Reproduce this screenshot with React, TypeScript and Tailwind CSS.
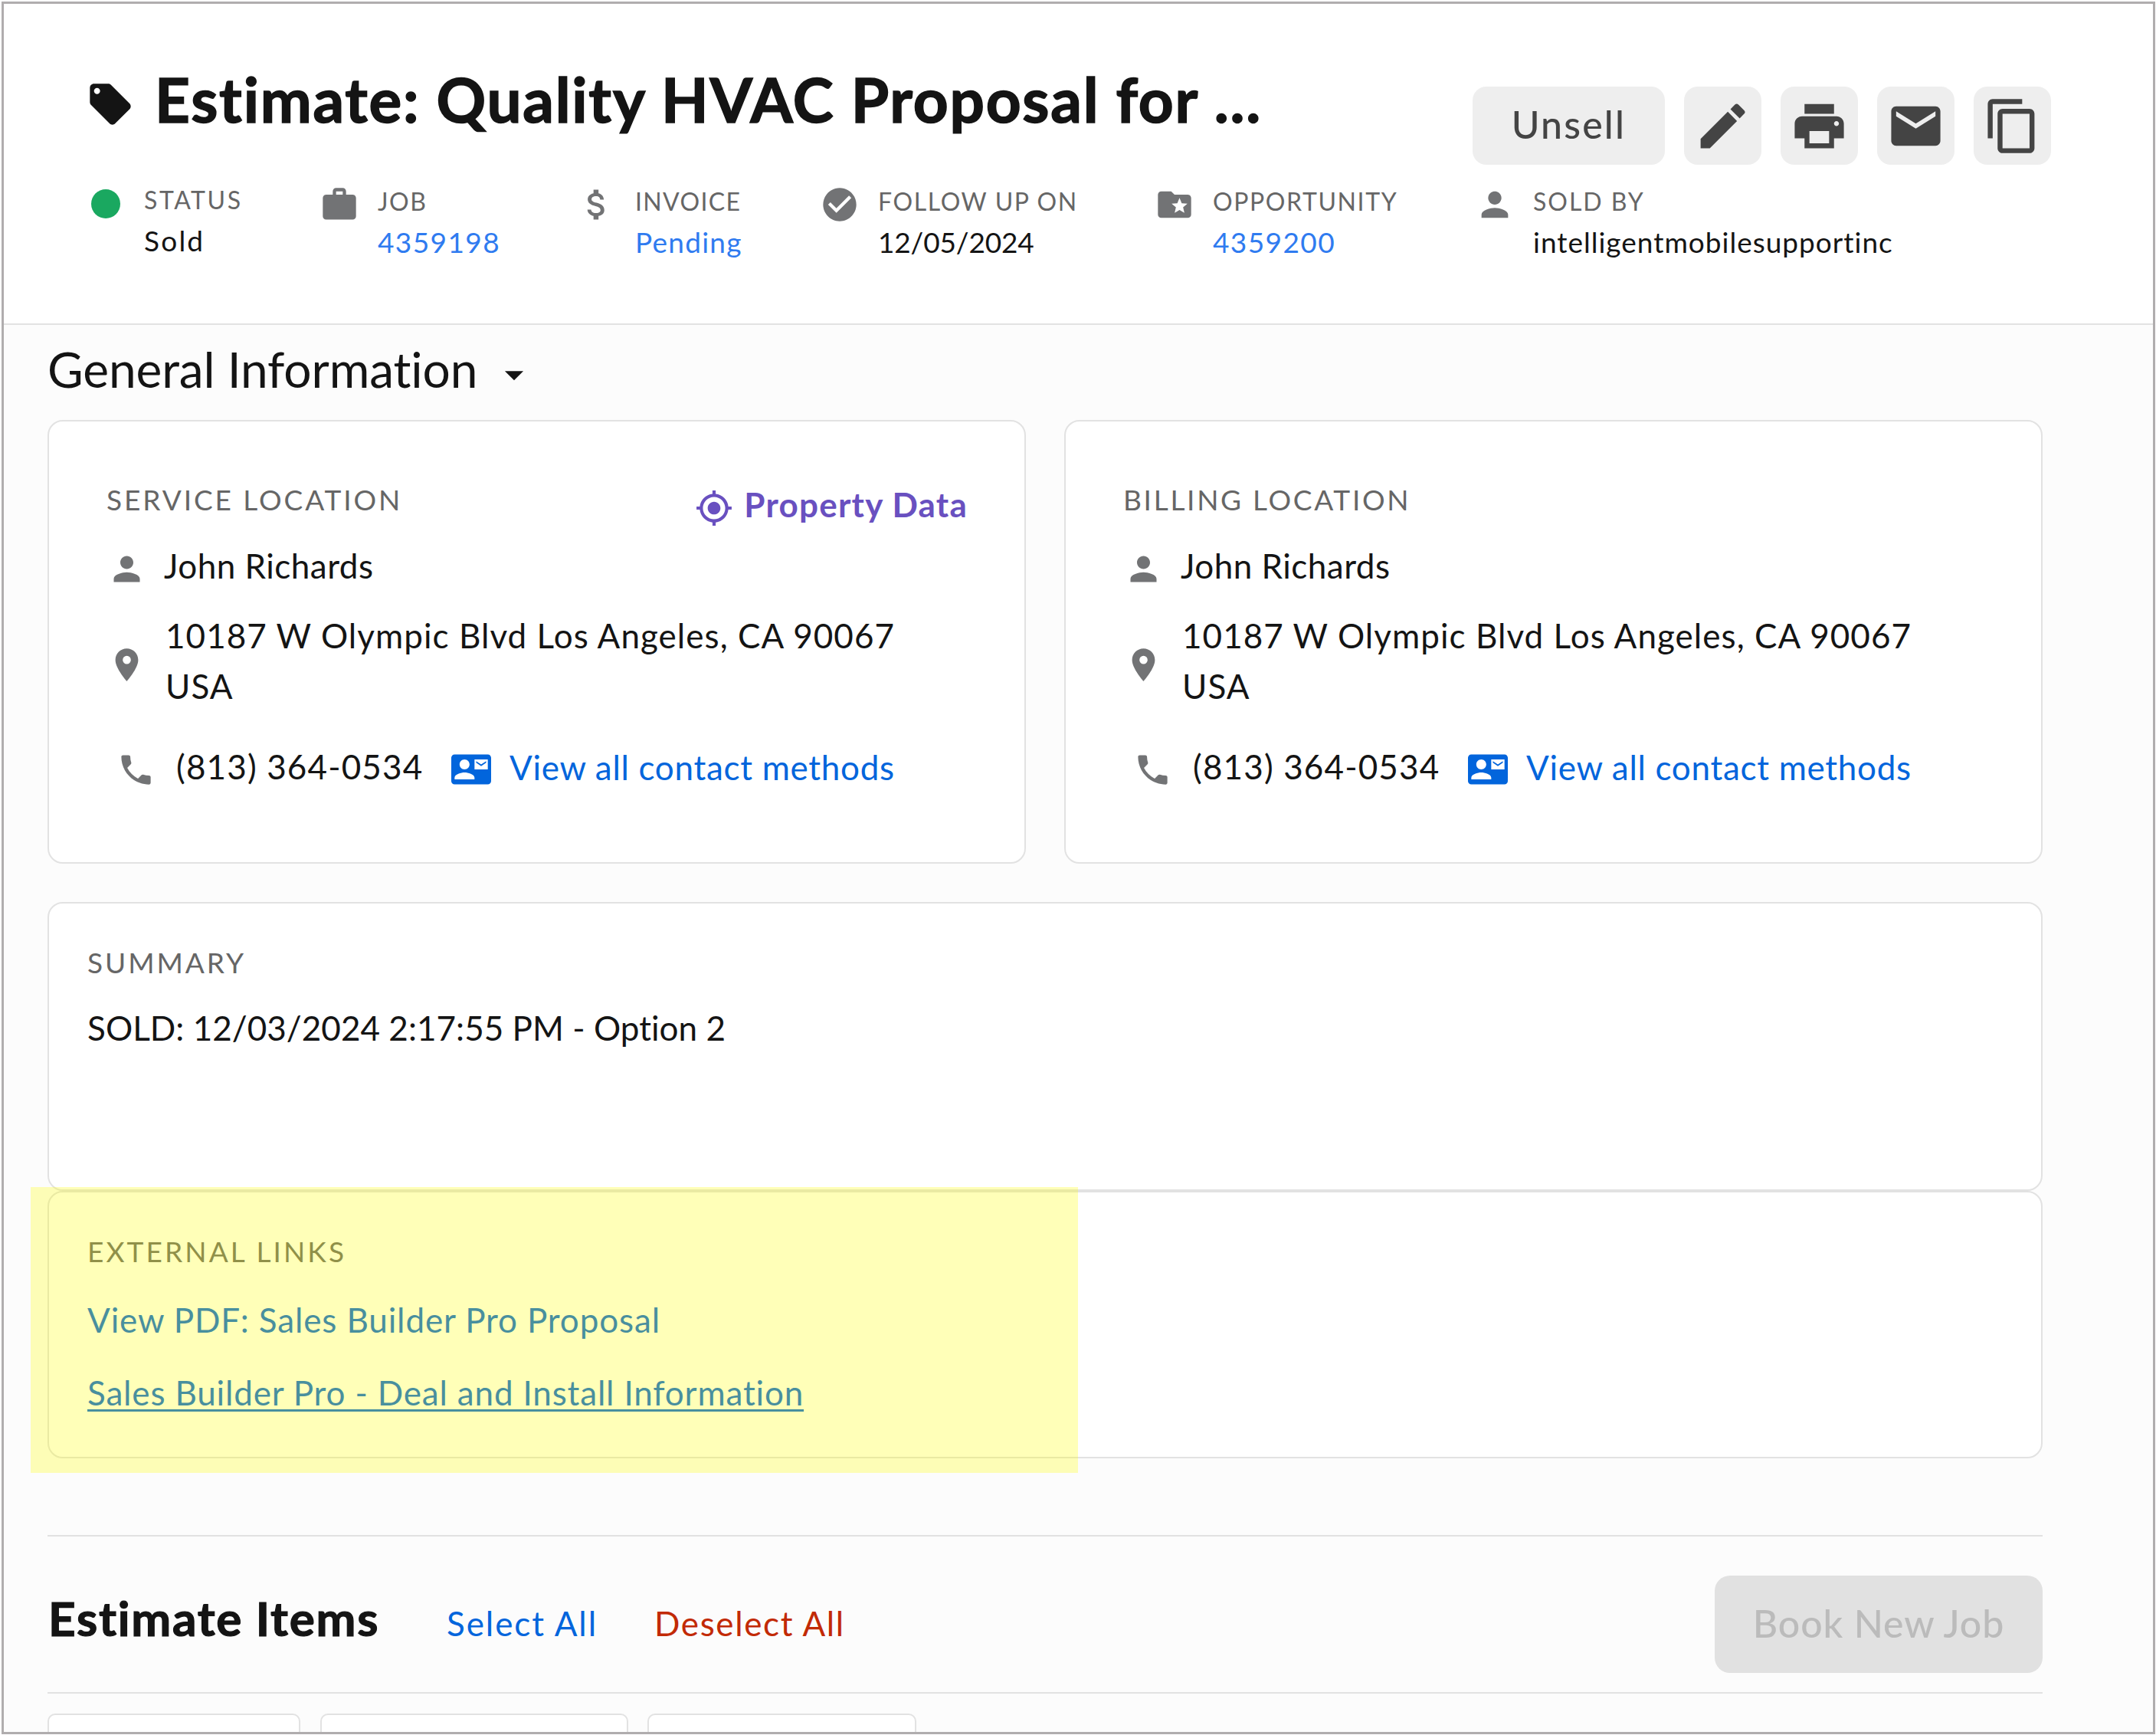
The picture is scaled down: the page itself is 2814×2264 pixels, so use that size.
import type { ReactNode } from "react";
import type { IconType } from "react-icons";
import {
  MdArrowDropDown,
  MdAttachMoney,
  MdCheckCircle,
  MdContactMail,
  MdContentCopy,
  MdEdit,
  MdEmail,
  MdFolderSpecial,
  MdGpsFixed,
  MdLocalOffer,
  MdLocationOn,
  MdPerson,
  MdPhone,
  MdPrint,
  MdWork,
} from "react-icons/md";

function MetaItem({
  icon: Icon,
  label,
  tracking,
  children,
}: {
  icon?: IconType;
  label: string;
  tracking: string;
  children: ReactNode;
}) {
  return (
    <div className="flex items-start gap-6">
      {Icon ? (
        <Icon className="mt-[2px] size-[52px] shrink-0 text-[#727375]" />
      ) : (
        <span className="mt-[8px] mr-[7px] ml-[7px] size-[38px] shrink-0 rounded-full bg-[#1aa860]" />
      )}
      <div className={Icon ? "pt-[1px]" : "-mt-[1px]"}>
        <div className={`text-[32px] leading-[46px] whitespace-nowrap text-[#666666] ${tracking}`}>{label}</div>
        <div className="text-[37px] leading-[60px] whitespace-nowrap">{children}</div>
      </div>
    </div>
  );
}

function IconButton({ icon: Icon, label }: { icon: IconType; label: string }) {
  return (
    <button
      aria-label={label}
      className="flex h-[102px] w-[101px] items-center justify-center rounded-[18px] bg-[#eeeeee] text-[#444444]"
    >
      <Icon className="size-[77px]" />
    </button>
  );
}

function SectionLabel({ children, className }: { children: ReactNode; className: string }) {
  return <h3 className={`text-[37px] leading-[44px] whitespace-nowrap text-[#666666] ${className}`}>{children}</h3>;
}

function LocationCard({ title, tracking, propertyData }: { title: string; tracking: string; propertyData?: boolean }) {
  return (
    <div className="h-[579px] rounded-[20px] border-2 border-[#e2e2e2] bg-white px-[75px] pt-[80px] text-[44px] leading-[66px]">
      <div className="flex h-[52px] justify-between">
        <SectionLabel className={tracking}>{title}</SectionLabel>
        {propertyData ? (
          <a className="-mr-[1px] mt-[4px] flex items-center gap-[14px] text-[#6950c0]">
            <MdGpsFixed className="mt-[9px] size-[50px]" />
            <span className="leading-[52px] font-bold tracking-[0.028em]">Property Data</span>
          </a>
        ) : null}
      </div>
      <div className="mt-[23px] flex items-center gap-[23px]">
        <MdPerson className="mt-[8px] ml-[1px] size-[51px] shrink-0 text-[#727375]" />
        <span className="tracking-[0.011em]">John Richards</span>
      </div>
      <div className="mt-[25px] flex items-center gap-[25px]">
        <MdLocationOn className="mt-[10px] ml-[1px] size-[51px] shrink-0 text-[#727375]" />
        <span className="tracking-[0.024em]">
          10187 W Olympic Blvd Los Angeles, CA 90067
          <br />
          USA
        </span>
      </div>
      <div className="mt-[37px] flex items-center">
        <MdPhone className="mt-[10px] ml-[13px] size-[51px] shrink-0 text-[#727375]" />
        <span className="ml-[27px] w-[359px] tracking-[0.026em]">(813) 364-0534</span>
        <a className="flex items-center gap-[24px] text-[#0265dc]">
          <MdContactMail className="mt-[9px] size-[52px]" />
          <span className="mt-[3px] tracking-[0.016em]">View all contact methods</span>
        </a>
      </div>
    </div>
  );
}

export default function App() {
  return (
    <div className="h-[2264px] w-[2814px] bg-white pt-[2px] pl-[2px] font-['Lato','Open_Sans',sans-serif] text-[#141414]">
      <div className="flex h-[2261px] w-[2811px] flex-col overflow-hidden border-[3px] border-[#b0adae]">
        <header className="h-[419px] shrink-0 border-b-2 border-[#e2e2e2] bg-white pr-[133px] pl-[107px]">
          <div className="flex h-[210px] items-start justify-between">
            <div className="flex items-start pt-[76px]">
              <MdLocalOffer className="mt-[23px] size-[64px]" />
              <h1 className="ml-[26px] text-[80px] leading-[96px] font-bold tracking-[0.022em] whitespace-nowrap [-webkit-text-stroke:1.5px_#141414]">
                Estimate: Quality HVAC Proposal for ...
              </h1>
            </div>
            <div className="flex gap-[25px] pt-[108px]">
              <button className="h-[102px] w-[251px] rounded-[18px] bg-[#eeeeee] pb-[3px] text-[50px] font-medium tracking-[0.044em] text-[#444444]">
                Unsell
              </button>
              <IconButton icon={MdEdit} label="Edit" />
              <IconButton icon={MdPrint} label="Print" />
              <IconButton icon={MdEmail} label="Email" />
              <IconButton icon={MdContentCopy} label="Copy" />
            </div>
          </div>
          <div className="mt-6 grid grid-cols-[305px_336px_317px_437px_418px_auto]">
            <MetaItem label="STATUS" tracking="tracking-[0.08em]">
              <span className="tracking-[0.06em]">Sold</span>
            </MetaItem>
            <MetaItem icon={MdWork} label="JOB" tracking="tracking-[0.05em]">
              <a className="tracking-[0.038em] text-[#2f7bf0]">4359198</a>
            </MetaItem>
            <MetaItem icon={MdAttachMoney} label="INVOICE" tracking="tracking-[0.042em]">
              <a className="tracking-[0.034em] text-[#2f7bf0]">Pending</a>
            </MetaItem>
            <MetaItem icon={MdCheckCircle} label="FOLLOW UP ON" tracking="tracking-[0.05em]">
              <span className="tracking-[-0.004em]">12/05/2024</span>
            </MetaItem>
            <MetaItem icon={MdFolderSpecial} label="OPPORTUNITY" tracking="tracking-[0.05em]">
              <a className="tracking-[0.038em] text-[#2f7bf0]">4359200</a>
            </MetaItem>
            <MetaItem icon={MdPerson} label="SOLD BY" tracking="tracking-[0.062em]">
              <span className="tracking-[0.027em]">intelligentmobilesupportinc</span>
            </MetaItem>
          </div>
        </header>

        <main className="flex-1 bg-[#fcfcfc] pt-[18px] pr-[144px] pl-[57px]">
          <div className="mb-[26px] flex h-[80px] items-center">
            <h2 className="text-[64px] leading-[80px] tracking-[-0.002em]">General Information</h2>
            <MdArrowDropDown className="mt-[13px] ml-[19px] size-[58px]" />
          </div>

          <div className="grid grid-cols-2 gap-[50px]">
            <LocationCard title="SERVICE LOCATION" tracking="tracking-[0.079em]" propertyData />
            <LocationCard title="BILLING LOCATION" tracking="tracking-[0.073em]" />
          </div>

          <section className="mt-[50px] h-[377px] rounded-[20px] border-2 border-[#e2e2e2] bg-white px-[50px] pt-[55px]">
            <SectionLabel className="tracking-[0.08em]">SUMMARY</SectionLabel>
            <p className="mt-[30px] text-[44px] leading-[66px] tracking-[0.001em]">
              SOLD: 12/03/2024 2:17:55 PM - Option 2
            </p>
          </section>

          <section className="relative h-[349px] rounded-[20px] border-2 border-[#e2e2e2] bg-white px-[50px] pt-[55px] text-[44px] leading-[66px] text-[#0265dc]">
            <SectionLabel className="tracking-[0.084em]">EXTERNAL LINKS</SectionLabel>
            <a className="mt-[34px] block w-fit tracking-[0.02em]">View PDF: Sales Builder Pro Proposal</a>
            <a className="mt-[29px] block w-fit tracking-[0.019em] underline decoration-[3px] underline-offset-[5px]">
              Sales Builder Pro - Deal and Install Information
            </a>
            <div className="pointer-events-none absolute -top-[7px] -left-[24px] h-[373px] w-[1367px] bg-[#ffff00]/28" />
          </section>

          <div className="mt-[100px] flex h-[207px] items-start border-y-2 border-[#e2e2e2]">
            <h2 className="mt-[66px] ml-px w-[520px] text-[62px] leading-[80px] font-bold tracking-[0.028em] [-webkit-text-stroke:1.2px_#141414]">
              Estimate Items
            </h2>
            <a className="mt-[80px] w-[271px] text-[44px] leading-[66px] tracking-[0.044em] text-[#0265dc]">
              Select All
            </a>
            <a className="mt-[80px] text-[44px] leading-[66px] tracking-[0.037em] text-[#c22a05]">Deselect All</a>
            <button
              disabled
              className="mt-[51px] ml-auto h-[127px] w-[428px] rounded-[20px] bg-[#e1e1e1] pb-[2px] text-[50px] font-medium tracking-[0.018em] text-[#bbbbbb]"
            >
              Book New Job
            </button>
          </div>

          <div className="mt-[26px] flex">
            <div className="h-[60px] w-[330px] rounded-t-[10px] border-2 border-[#e2e2e2] bg-white" />
            <div className="ml-[26px] h-[60px] w-[402px] rounded-t-[10px] border-2 border-[#e2e2e2] bg-white" />
            <div className="ml-[25px] h-[60px] w-[351px] rounded-t-[10px] border-2 border-[#e2e2e2] bg-white" />
          </div>
        </main>
      </div>
    </div>
  );
}
